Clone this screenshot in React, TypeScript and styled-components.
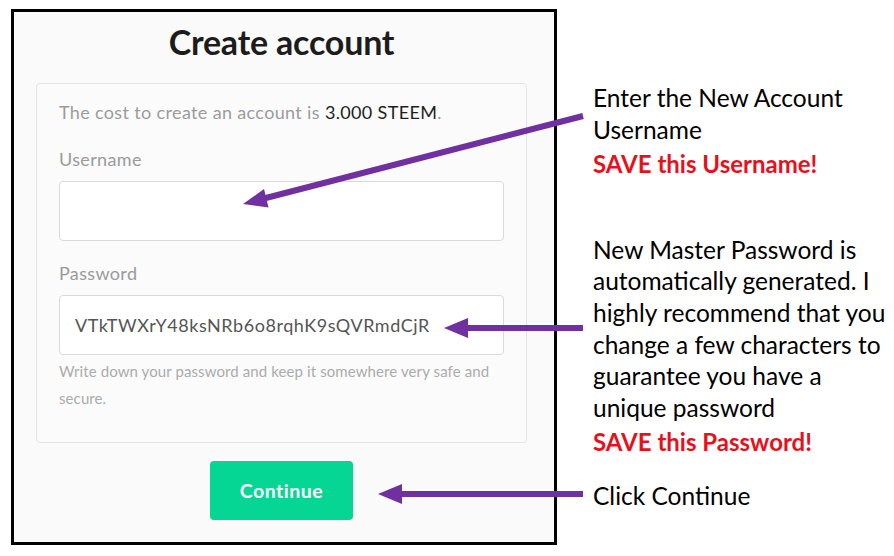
import { createGlobalStyle, styled } from 'styled-components';

const GlobalStyle = createGlobalStyle`
  html, body {
    margin: 0;
    padding: 0;
    background: #ffffff;
  }
`;

const PURPLE = '#7030a0';

const Arrows = () => (
  <St.Overlay width="894" height="556" viewBox="0 0 894 556">
    <g fill={PURPLE} stroke={PURPLE}>
      <line x1="583" y1="116" x2="262" y2="199" strokeWidth="6" />
      <polygon points="243,204 268.5,207.5 264,189" stroke="none" />
      <line x1="583" y1="328" x2="464" y2="328" strokeWidth="6" />
      <polygon points="444,328 468,318 468,338" stroke="none" />
      <line x1="583" y1="494" x2="398" y2="494" strokeWidth="6" />
      <polygon points="378,494 402,484 402,504" stroke="none" />
    </g>
  </St.Overlay>
);

const App = () => {
  return (
    <>
      <GlobalStyle />
      <St.Page>
        <St.Frame>
          <St.Title>Create account</St.Title>
          <St.Card>
            <St.Cost>
              The cost to create an account is <strong>3.000 STEEM</strong>.
            </St.Cost>
            <St.Label $gap={23}>Username</St.Label>
            <St.Input />
            <St.Label $gap={20}>Password</St.Label>
            <St.Input>VTkTWXrY48ksNRb6o8rqhK9sQVRmdCjR</St.Input>
            <St.Hint>Write down your password and keep it somewhere very safe and secure.</St.Hint>
          </St.Card>
          <St.Button>Continue</St.Button>
        </St.Frame>

        <St.Notes>
          <St.Note $top={82}>
            Enter the New Account
            <br />
            Username
          </St.Note>
          <St.Warn>SAVE this Username!</St.Warn>
          <St.Note $top={54}>
            New Master Password is
            <br />
            automatically generated. I
            <br />
            highly recommend that you
            <br />
            change a few characters to
            <br />
            guarantee you have a
            <br />
            unique password
          </St.Note>
          <St.Warn>SAVE this Password!</St.Warn>
          <St.Note $top={22}>Click Continue</St.Note>
        </St.Notes>

        <Arrows />
      </St.Page>
    </>
  );
};

export default App;

const St = {
  Page: styled.div`
    position: relative;
    display: flex;
    width: 894px;
    height: 556px;
    overflow: hidden;
    background: #ffffff;
  `,
  Overlay: styled.svg`
    position: absolute;
    top: 0;
    left: 0;
    pointer-events: none;
  `,
  Frame: styled.section`
    display: flex;
    flex-direction: column;
    align-items: center;
    box-sizing: border-box;
    width: 546px;
    height: 536px;
    margin: 9px 0 0 11px;
    padding: 10px 27px 0 22px;
    border: 3px solid #000000;
    background: #fafafa;
    font-family: Lato, 'Noto Sans', sans-serif;
  `,
  Title: styled.h1`
    margin: 0;
    height: 40px;
    line-height: 40px;
    font-size: 34px;
    font-weight: 700;
    color: #1c1c1c;
    letter-spacing: -0.2px;
  `,
  Card: styled.div`
    display: flex;
    flex-direction: column;
    box-sizing: border-box;
    width: 491px;
    height: 360px;
    margin-top: 21px;
    padding: 16px 22px 0 22px;
    border: 1px solid #e4e4e4;
    border-radius: 4px;
    background: #fbfbfb;
  `,
  Cost: styled.p`
    margin: 0;
    line-height: 24px;
    font-size: 18px;
    letter-spacing: 0.35px;
    color: #9b9b9b;

    & > strong {
      font-weight: 400;
      color: #1e1e1e;
    }
  `,
  Label: styled.div<{ $gap: number }>`
    margin-top: ${({ $gap }) => $gap}px;
    line-height: 24px;
    font-size: 18px;
    letter-spacing: 0.35px;
    color: #9a9a9a;
  `,
  Input: styled.div`
    box-sizing: border-box;
    height: 60px;
    margin-top: 10px;
    padding: 0 15px;
    border: 1px solid #dadada;
    border-radius: 4px;
    background: #ffffff;
    line-height: 58px;
    font-size: 18px;
    color: #555555;
    letter-spacing: 0.55px;
  `,
  Hint: styled.p`
    margin: 3px 0 0;
    line-height: 27px;
    font-size: 15px;
    letter-spacing: 0.1px;
    color: #ababab;
  `,
  Button: styled.button`
    width: 143px;
    height: 59px;
    margin-top: 18px;
    border: none;
    border-radius: 4px;
    background: #06d694;
    color: #ffffff;
    font-family: Lato, 'Noto Sans', sans-serif;
    font-size: 19.5px;
    font-weight: 700;
    letter-spacing: 0.5px;
  `,
  Notes: styled.div`
    display: flex;
    flex-direction: column;
    margin-left: 36px;
    font-family: Lato, 'Noto Sans', sans-serif;
    font-size: 24.5px;
    line-height: 31.6px;
    white-space: nowrap;
  `,
  Note: styled.div<{ $top: number }>`
    margin-top: ${({ $top }) => $top}px;
    color: #000000;
  `,
  Warn: styled.div`
    margin-top: 3px;
    color: #e8101a;
    font-weight: 700;
    font-size: 24px;
  `,
};
